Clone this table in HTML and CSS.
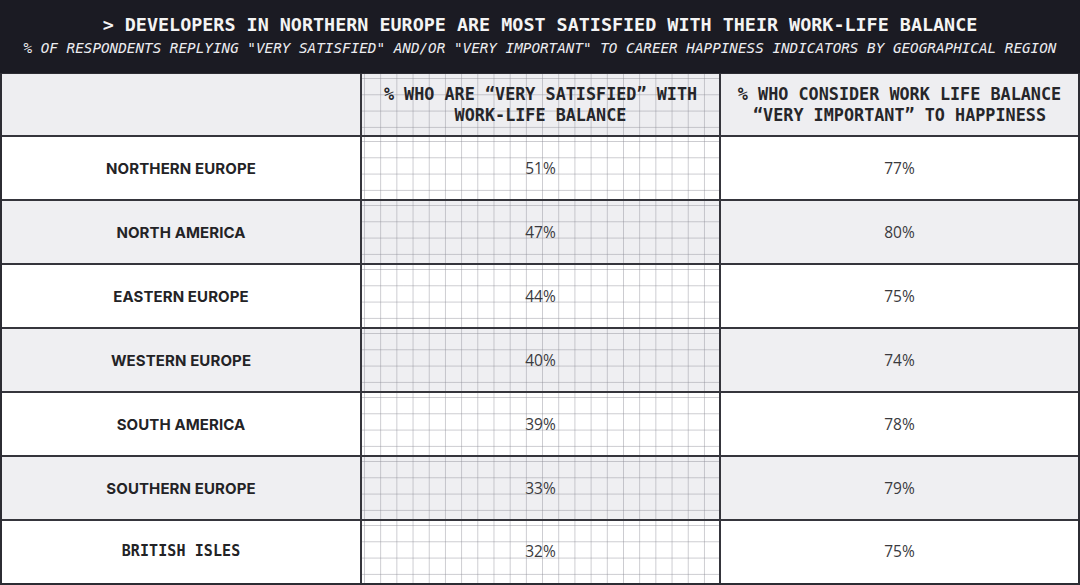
FILE: index.html
```html
<!DOCTYPE html>
<html>
<head>
<meta charset="utf-8">
<link rel="stylesheet" href="styles.css">
</head>
<body>
<div class="page">
  <header class="banner">
    <h1 class="title">&gt; DEVELOPERS IN NORTHERN EUROPE ARE MOST SATISFIED WITH THEIR WORK-LIFE BALANCE</h1>
    <p class="subtitle">% OF RESPONDENTS REPLYING "VERY SATISFIED" AND/OR "VERY IMPORTANT" TO CAREER HAPPINESS INDICATORS BY GEOGRAPHICAL REGION</p>
  </header>
  <div class="table">
    <div class="row head">
      <div class="cell"></div>
      <div class="cell grid colhead">% WHO ARE “VERY SATISFIED” WITH<br>WORK-LIFE BALANCE</div>
      <div class="cell colhead">% WHO CONSIDER WORK LIFE BALANCE<br>“VERY IMPORTANT” TO HAPPINESS</div>
    </div>
    <div class="row">
      <div class="cell region">NORTHERN EUROPE</div>
      <div class="cell grid num">51%</div>
      <div class="cell num">77%</div>
    </div>
    <div class="row alt">
      <div class="cell region">NORTH AMERICA</div>
      <div class="cell grid num">47%</div>
      <div class="cell num">80%</div>
    </div>
    <div class="row">
      <div class="cell region">EASTERN EUROPE</div>
      <div class="cell grid num">44%</div>
      <div class="cell num">75%</div>
    </div>
    <div class="row alt">
      <div class="cell region">WESTERN EUROPE</div>
      <div class="cell grid num">40%</div>
      <div class="cell num">74%</div>
    </div>
    <div class="row">
      <div class="cell region">SOUTH AMERICA</div>
      <div class="cell grid num">39%</div>
      <div class="cell num">78%</div>
    </div>
    <div class="row alt">
      <div class="cell region">SOUTHERN EUROPE</div>
      <div class="cell grid num">33%</div>
      <div class="cell num">79%</div>
    </div>
    <div class="row last">
      <div class="cell region mono">BRITISH ISLES</div>
      <div class="cell grid num">32%</div>
      <div class="cell num">75%</div>
    </div>
  </div>
</div>
</body>
</html>
```

FILE: styles.css
```css
* { box-sizing: border-box; margin: 0; padding: 0; }
html, body { width: 1080px; height: 585px; overflow: hidden; background: #1b1b23; }
body { font-family: "DejaVu Sans Mono", monospace; }

.page { width: 1080px; height: 585px; display: flex; flex-direction: column; }

.banner {
  height: 73px;
  flex: none;
  background: #1b1b23;
  color: #f4f4f4;
  display: flex;
  flex-direction: column;
  align-items: center;
  padding-top: 14px;
}
.title {
  font-family: "DejaVu Sans Mono", "Liberation Mono", monospace;
  font-weight: bold;
  font-size: 18.4px;
  line-height: 22px;
  white-space: nowrap;
}
.subtitle {
  font-family: "DejaVu Sans Mono", "Liberation Mono", monospace;
  font-style: italic;
  font-size: 14.3px;
  line-height: 18px;
  margin-top: 3px;
  color: #ececf0;
  white-space: nowrap;
}

.table {
  flex: none;
  display: flex;
  flex-direction: column;
  background: #fff;
  border-left: 2px solid #2c2c33;
  border-right: 2px solid #2c2c33;
}
.row {
  display: grid;
  grid-template-columns: 358px 359px 1fr;
  height: 64px;
  border-top: 2px solid #35353c;
  background: #ffffff;
}
.row.head { height: 62px; border-top: 1px solid #2c2c33; background: #eeeef1; }
.row.alt { background: #efeff2; }
.row.last { height: 66px; border-bottom: 2px solid #2c2c33; }

.cell {
  display: flex;
  align-items: center;
  justify-content: center;
  text-align: center;
  color: #232326;
}
.cell + .cell { border-left: 2px solid #35353c; }

.grid {
  background-image:
    linear-gradient(to right, rgba(140,140,150,0.45) 1px, transparent 1px),
    linear-gradient(to bottom, rgba(140,140,150,0.45) 1px, transparent 1px);
  background-size: 16.2px 16.3px;
  background-position: 2px 4px;
}

.colhead {
  font-family: "DejaVu Sans Mono", "Liberation Mono", monospace;
  font-weight: bold;
  font-size: 16.8px;
  line-height: 21px;
  padding-top: 1px;
  color: #26262a;
}
.region {
  font-family: "Inter", "Roboto", sans-serif;
  font-weight: 700;
  font-size: 15px;
  letter-spacing: 0.1px;
  color: #232326;
}
.region.mono {
  font-family: "DejaVu Sans Mono", monospace;
  font-size: 15px;
  font-weight: bold;
}
.row.last .cell { padding-bottom: 2px; }
.num {
  font-family: "Open Sans", "Noto Sans", sans-serif;
  font-size: 15.5px;
  color: #3a3a3e;
}
```
